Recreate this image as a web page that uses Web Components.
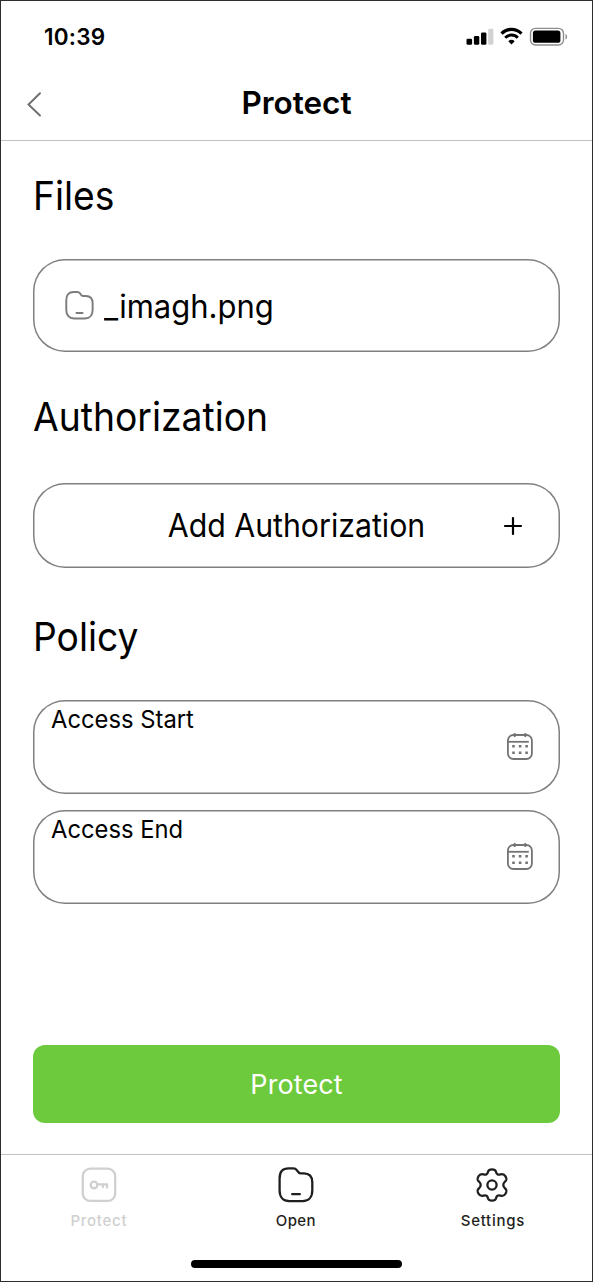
<!DOCTYPE html>
<html lang="en">
<head>
<meta charset="utf-8">
<title>Protect</title>
<style>
  html, body { margin: 0; height: 100%; background: #fff; }
  body { font-family: Inter, "Liberation Sans", sans-serif; color: #000; }
</style>
</head>
<body>
<app-screen>
  <status-bar></status-bar>
  <nav-header>Protect</nav-header>
  <form-section heading="Files">
    <file-card>_imagh.png</file-card>
  </form-section>
  <form-section heading="Authorization" style="--top:41px;--gap:42px">
    <add-card>Add Authorization</add-card>
  </form-section>
  <form-section heading="Policy" style="--top:45px;--gap:39px">
    <date-card>Access Start</date-card>
    <date-card>Access End</date-card>
  </form-section>
  <action-button>Protect</action-button>
  <tab-bar slot="footer">
    <tab-item icon="key" disabled>Protect</tab-item>
    <tab-item icon="folder" style="--t:0.4px">Open</tab-item>
    <tab-item icon="gear">Settings</tab-item>
  </tab-bar>
</app-screen>
<script>
const ICONS = {
  folder: `<svg viewBox="0 0 36 36" fill="none" stroke="currentColor" stroke-linecap="round" stroke-linejoin="round">
    <path d="M1.6 11.5C1.6 4.5 4.6 1.3 10.6 1.3h4.6c2 0 2.8.6 3.6 1.8 1 1.6 1.7 3.2 3.7 3.2h3.3c5.800 0 8.500 3.200 8.500 9v8.200c0 6.700-3.700 10.600-9.500 10.600H11.200c-6 0-9.600-4.100-9.600-10.600z"/><path d="M14.200 27.200h7.600"/></svg>`,
  key: `<svg viewBox="0 0 36 36" fill="none" stroke="currentColor" stroke-linecap="round" stroke-linejoin="round">
    <rect x="1.800" y="1.700" width="32.400" height="32.200" rx="7.500"/><circle cx="13" cy="18" r="3.300"/><path d="M16.400 17.300h9.600v3.300M22 17.300v2.800"/></svg>`,
  gear: `<svg viewBox="0 0 36 36" fill="none" stroke="currentColor" stroke-linecap="round" stroke-linejoin="round">
    <circle cx="18" cy="18" r="4.600"/><path d="M14 4.700C14.500 2.900 15.700 2.300 18 2.300S21.500 2.900 22 4.700C22.500 7.300 23.900 8.200 26.500 7.400C29.300 6.600 30.300 7.300 31.500 9.300C33 11.900 33 12.900 31.100 14.500C28.700 16.700 28.700 19.300 31.100 21.500C33 23.100 33 24.100 31.500 26.700C30.300 28.700 29.300 29.400 26.500 28.600C23.900 27.800 22.500 28.700 22 31.300C21.500 33.100 20.300 33.700 18 33.700S14.500 33.100 14 31.300C13.500 28.700 12.100 27.800 9.500 28.600C6.700 29.400 5.700 28.700 4.500 26.700C3 24.100 3 23.100 4.900 21.500C7.300 19.300 7.300 16.700 4.900 14.500C3 12.900 3 11.900 4.500 9.300C5.700 7.300 6.700 6.600 9.500 7.400C12.100 8.200 13.500 7.300 14 4.700z"/></svg>`,
  calendar: `<svg viewBox="0 0 28 30" fill="none" stroke="currentColor">
    <rect x="1.900" y="3" width="24" height="24" rx="5.500" stroke-width="1.800"/><path d="M2 9.800h20.800" stroke-width="1.800"/><path d="M8.700 1v4M19.300 1v4" stroke-width="1.800"/>
    <path d="M6.200 14.300h2.600M12.800 14.300h2.600M19.300 14.300h2.600M6.200 20.800h2.600M12.800 20.800h2.600M19.300 20.800h2.600" stroke-width="2.500"/></svg>`
};

const define = (name, css, html) => customElements.define(name, class extends HTMLElement {
  constructor() {
    super();
    const t = document.createElement('template');
    t.innerHTML = `<style>${css}</style>` + (typeof html === 'function' ? html(this) : html);
    this.attachShadow({ mode: 'open' }).append(t.content.cloneNode(true));
  }
});

define('app-screen', `
  :host { display: flex; flex-direction: column; box-sizing: border-box; width: 593px; height: 1282px; border: 1px solid #2f2b2f; background: #fff; }
  main { flex: 1; display: flex; flex-direction: column; }
`, `<main><slot></slot></main><slot name="footer"></slot>`);

define('status-bar', `
  :host { display: flex; justify-content: space-between; align-items: center; box-sizing: border-box; height: 71px; padding: 0 23px 0 43px; }
  span { font-size: 22.500px; font-weight: 600; letter-spacing: 0.200px; padding-bottom: 1px; }
  svg { display: block; }
`, `<span>10:39</span>
  <svg width="104" height="20" viewBox="0 0 104 20">
    <rect x="1.500" y="11.800" width="5.600" height="6" rx="1.300"/><rect x="8.900" y="9" width="5.400" height="8.800" rx="1.300"/>
    <rect x="16" y="5.500" width="5.400" height="12.300" rx="1.300"/><rect x="23.200" y="1.800" width="5.200" height="16" rx="1.300" fill="#d2d2d2"/>
    <path d="M36.500 6.600a13.900 13.900 0 0 1 20 0" fill="none" stroke="#000" stroke-width="3.200"/>
    <path d="M40.200 10.700a8.800 8.800 0 0 1 12.600 0" fill="none" stroke="#000" stroke-width="3"/>
    <path d="M43.300 14.200a4.700 4.700 0 0 1 6.400 0L46.500 17.600z"/>
    <rect x="65.500" y="1.400" width="33" height="16.600" rx="5" fill="none" stroke="#8d8d8d" stroke-width="1.400"/>
    <rect x="67.900" y="3.600" width="27.500" height="12.200" rx="2.600"/>
    <path d="M100.500 7v5.600c2.200-.6 2.200-5 0-5.600z" fill="#8d8d8d"/>
  </svg>`);

define('nav-header', `
  :host { display: grid; grid-template-columns: 60px 1fr 60px; align-items: center; box-sizing: border-box; height: 69px; padding-bottom: 5px; border-bottom: 1px solid #c0c0c0; }
  svg { margin-left: 24px; display: block; }
  h1 { margin: 0 0 1px; text-align: center; font-size: 31.500px; line-height: 40px; font-weight: 600; }
`, `<svg width="20" height="28" viewBox="0 0 20 28" fill="none" stroke="#6e6e6e" stroke-width="1.900" stroke-linecap="round"><path d="M15 3.200L3.500 14.500L15 25.500"/></svg><h1><slot></slot></h1>`);

define('form-section', `
  :host { display: block; padding: var(--top, 31px) 32px 0; }
  h2 { margin: 0 0 var(--gap, 39px) -0.500px; height: 48px; line-height: 48px; font-size: 40px; font-weight: 400; transform: scaleX(.932); transform-origin: left; }
  div { display: flex; flex-direction: column; gap: 16px; }
`, el => `<h2>${el.getAttribute('heading')}</h2><div><slot></slot></div>`);

const CARD = `border-radius: 32px; box-shadow: inset 0 0 0 1.500px #808080; box-sizing: border-box;`;

define('file-card', `
  :host { display: flex; align-items: center; height: 93px; padding-left: 32px; gap: 10px; font-size: 32px; ${CARD} }
  svg { width: 29px; height: 29px; color: #7c7c7c; stroke-width: 2.400; flex: none; }
  span { padding-top: 1px; transform: scaleX(.968); transform-origin: left; }
`, `${ICONS.folder}<span><slot></slot></span>`);

define('add-card', `
  :host { display: grid; grid-template-columns: 60px 1fr 60px; align-items: center; height: 85px; padding: 0 16px; font-size: 32px; text-align: center; ${CARD} }
  svg { justify-self: center; margin-left: -3px; grid-column: 3; }
  span { grid-column: 2; transform: scaleX(.946); }
`, `<span><slot></slot></span><svg width="20" height="20" viewBox="0 0 20 20" stroke="#000" stroke-width="2.200" stroke-linecap="round"><path d="M10 2v16M2 10h16"/></svg>`);

define('date-card', `
  :host { display: flex; justify-content: space-between; align-items: center; height: 94px; padding: 0 26.500px 0 17.500px; ${CARD} }
  span { align-self: flex-start; margin-top: 4px; line-height: 30px; font-size: 24.500px; transform: scaleX(.971); transform-origin: left; }
  svg { width: 28px; height: 30px; color: #747474; }
`, `<span><slot></slot></span>${ICONS.calendar}`);

define('action-button', `
  :host { display: flex; align-items: center; justify-content: center; margin: auto 32px 31px; height: 78.500px; border-radius: 12px; background: #6cca3c; color: #fff; font-size: 27px; letter-spacing: 0.100px; }
  span { padding-top: 2px; }
`, `<span><slot></slot></span>`);

define('tab-bar', `
  :host { display: flex; flex-direction: column; height: 126px; border-top: 1px solid #c0c0c0; }
  nav { display: grid; grid-template-columns: repeat(3, 1fr); flex: 1; margin: 0 1px 0 -1px; }
  i { display: block; align-self: center; width: 211px; height: 8px; border-radius: 4px; background: #000; margin-bottom: 13px; }
`, `<nav><slot></slot></nav><i></i>`);

define('tab-item', `
  :host { display: flex; flex-direction: column; align-items: center; padding-top: 12px; color: #1f1f21; font-size: 15px; font-weight: 500; }
  :host([disabled]) { color: #d0d0d0; }
  :host([icon="gear"]) svg { margin-right: 1px; }
  svg { width: 36px; height: 36px; stroke-width: 2.300; }
  span { margin-top: 8px; padding-left: 0.700px; line-height: 20px; letter-spacing: var(--t, 0.720px); }
`, el => `${ICONS[el.getAttribute('icon')]}<span><slot></slot></span>`);
</script>
</body>
</html>
